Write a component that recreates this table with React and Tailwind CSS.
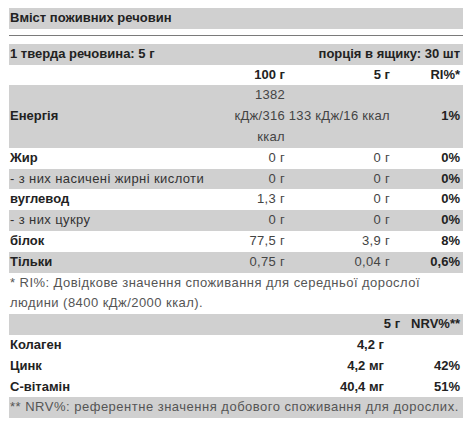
import React from "react";

const rows = [
  { label: "Жир", per100: "0 г", per5: "0 г", ri: "0%", gray: false },
  { label: "- з них насичені жирні кислоти", per100: "0 г", per5: "0 г", ri: "0%", gray: true, sub: true },
  { label: "вуглевод", per100: "1,3 г", per5: "0 г", ri: "0%", gray: false },
  { label: "- з них цукру", per100: "0 г", per5: "0 г", ri: "0%", gray: true, sub: true },
  { label: "білок", per100: "77,5 г", per5: "3,9 г", ri: "8%", gray: false },
  { label: "Тільки", per100: "0,75 г", per5: "0,04 г", ri: "0,6%", gray: true },
];

const extras = [
  { label: "Колаген", amount: "4,2 г", nrv: "" },
  { label: "Цинк", amount: "4,2 мг", nrv: "42%" },
  { label: "С-вітамін", amount: "40,4 мг", nrv: "51%" },
];

export default function App() {
  return (
    <div
      className="w-[474px] h-[429px] bg-white pt-[8px] pl-[9px] text-[13px] leading-[20.8px] text-[#222]"
      style={{ fontFamily: '"Liberation Sans", Arial, sans-serif' }}
    >
      <div className="w-[454px]">
        <div className="bg-[#d0d0d0] pl-[1px] font-bold">Вміст поживних речовин</div>
        <div className="mt-[6px] h-px bg-[#7a7a7a]" />

        <div className="mt-[8px] flex justify-between bg-[#d0d0d0] pl-[1px] pr-[3px] font-bold">
          <span>1 тверда речовина: 5 г</span>
          <span>порція в ящику: 30 шт</span>
        </div>

        <table className="w-[454px] table-fixed border-collapse">
          <colgroup>
            <col className="w-[217px]" />
            <col className="w-[62px]" />
            <col className="w-[105px]" />
            <col className="w-[70px]" />
          </colgroup>
          <tbody>
            <tr className="font-bold">
              <td className="p-0" />
              <td className="p-0 pr-[3px] text-right">100 г</td>
              <td className="p-0 pr-[3px] text-right">5 г</td>
              <td className="p-0 pr-[3px] text-right">RI%*</td>
            </tr>
            <tr className="bg-[#d0d0d0]">
              <td className="p-0 pl-[1px] font-bold align-middle">Енергія</td>
              <td className="p-0 pr-[3px] text-right text-[#444] tracking-[0.3px] align-middle">1382 кДж/316 ккал</td>
              <td className="p-0 pr-[3px] text-right text-[#444] tracking-[0.3px] whitespace-nowrap align-middle">133 кДж/16 ккал</td>
              <td className="p-0 pr-[3px] text-right font-bold align-middle">1%</td>
            </tr>
            {rows.map((r) => (
              <tr key={r.label} className={r.gray ? "bg-[#d0d0d0]" : "bg-white"}>
                <td className={`p-0 pl-[1px] whitespace-nowrap ${r.sub ? "font-normal text-[#333] tracking-[0.4px]" : "font-bold"}`}>
                  {r.label}
                </td>
                <td className="p-0 pr-[3px] text-right text-[#444] tracking-[0.3px]">{r.per100}</td>
                <td className="p-0 pr-[3px] text-right text-[#444] tracking-[0.3px]">{r.per5}</td>
                <td className="p-0 pr-[3px] text-right font-bold">{r.ri}</td>
              </tr>
            ))}
          </tbody>
        </table>

        <p className="pl-[1px] text-[#555] tracking-[0.45px]">
          * RI%: Довідкове значення споживання для середньої дорослої людини (8400 кДж/2000 ккал).
        </p>

        <div className="flex justify-end gap-[11px] bg-[#d0d0d0] pr-[3px] font-bold">
          <span>5 г</span>
          <span>NRV%**</span>
        </div>

        {extras.map((e) => (
          <div key={e.label} className="flex font-bold">
            <span className="flex-1 pl-[1px]">{e.label}</span>
            <span className="w-[67px] pr-[3px] text-right">{e.amount}</span>
            <span className="w-[76px] pr-[3px] text-right">{e.nrv}</span>
          </div>
        ))}

        <p className="bg-[#d0d0d0] pl-[1px] text-[#555] tracking-[0.5px] whitespace-nowrap">
          ** NRV%: референтне значення добового споживання для дорослих.
        </p>
      </div>
    </div>
  );
}
